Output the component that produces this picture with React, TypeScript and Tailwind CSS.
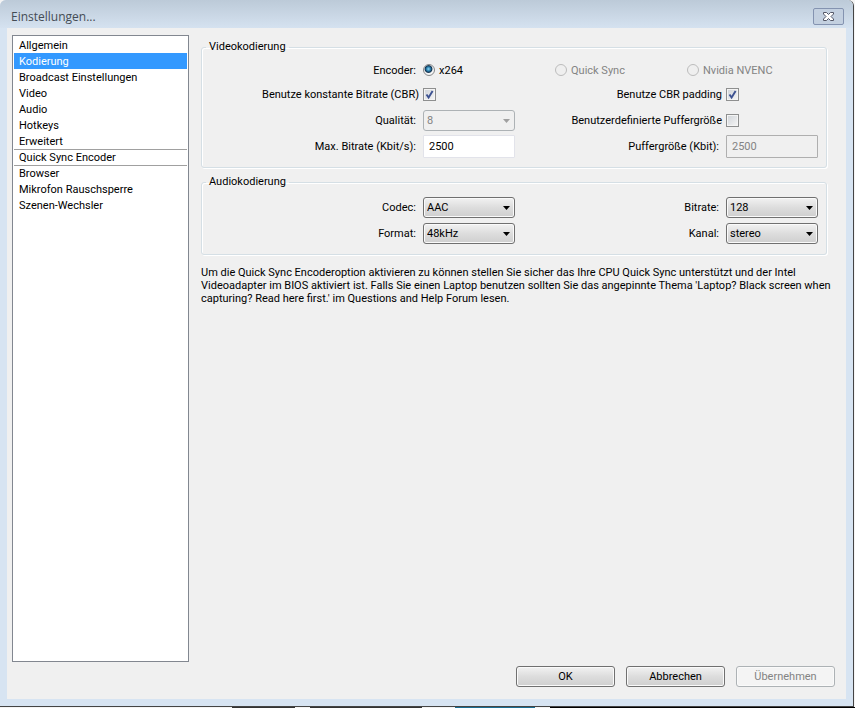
import type { ReactNode } from 'react';

const sections = [
  'Allgemein',
  'Kodierung',
  'Broadcast Einstellungen',
  'Video',
  'Audio',
  'Hotkeys',
  'Erweitert',
  'Quick Sync Encoder',
  'Browser',
  'Mikrofon Rauschsperre',
  'Szenen-Wechsler',
];

function Group({ title, children }: { title: string; children: ReactNode }) {
  return (
    <fieldset className="min-w-0 rounded-[3px] border border-[#d5dfe5] pt-[5px] pb-2 shadow-[inset_1px_1px_0_#fff,1px_1px_0_#fff]">
      <legend className="ml-1 px-[3px] leading-[14px]">{title}</legend>
      {children}
    </fieldset>
  );
}

function Row({ children }: { children: ReactNode }) {
  return <div className="flex h-[26px] items-center pr-2">{children}</div>;
}

function Caption({ id, first, tight, children }: { id: string; first?: boolean; tight?: boolean; children: ReactNode }) {
  const size = first ? 'w-[221px] shrink-0' : 'min-w-0 flex-1';
  return (
    <label htmlFor={id} className={`${size} ${tight ? 'pr-1' : 'pr-[7px]'} text-right whitespace-nowrap`}>
      {children}
    </label>
  );
}

function Check({ id, checked }: { id: string; checked?: boolean }) {
  return (
    <div className="w-[92px] shrink-0">
      <span className="relative block size-[13px]">
        <input
          id={id}
          type="checkbox"
          defaultChecked={checked}
          className="peer block size-[13px] appearance-none border border-[#8e8f8f] bg-linear-to-br from-[#cfd3d8] to-[#f6f6f6] shadow-[inset_0_0_0_1px_#f4f4f4]"
        />
        <svg viewBox="0 0 13 13" className="pointer-events-none absolute inset-0 hidden size-[13px] peer-checked:block" aria-hidden="true">
          <path d="M3.5 6.5 L5.6 9.6 L9.6 3" fill="none" stroke="#3d5291" strokeWidth="1.9" />
        </svg>
      </span>
    </div>
  );
}

function Radio({ id, label, checked, disabled }: { id: string; label: string; checked?: boolean; disabled?: boolean }) {
  return (
    <div className="flex w-[132px] items-center gap-1">
      <input
        id={id}
        type="radio"
        name="encoder"
        defaultChecked={checked}
        disabled={disabled}
        className="size-3 appearance-none rounded-full border border-[#858789] bg-[#f4f4f4] checked:bg-[radial-gradient(circle_at_45%_40%,#8fd8f5_0,#2a7fae_25%,#12324f_42%,#f4f4f4_54%)] disabled:border-[#bcbcbc] disabled:bg-[#efefef]"
      />
      <label htmlFor={id} className={`whitespace-nowrap ${disabled ? 'text-[#838383]' : ''}`}>
        {label}
      </label>
    </div>
  );
}

function Drop({ id, value, disabled }: { id: string; value: string; disabled?: boolean }) {
  return (
    <div className="relative w-[92px] shrink-0">
      <select
        id={id}
        disabled={disabled}
        defaultValue={value}
        className="block h-[21px] w-full appearance-none rounded-[3px] border border-[#707070] bg-linear-to-b from-[#f2f2f2] from-0% via-[#ddd] via-50% to-[#cfcfcf] px-[3px] leading-[19px] shadow-[inset_0_0_0_1px_#fafafa] disabled:border-[#adb2b5] disabled:bg-none disabled:text-[#838383] disabled:opacity-100 disabled:shadow-none"
      >
        <option>{value}</option>
      </select>
      <svg viewBox="0 0 7 4" className={`pointer-events-none absolute top-[9px] right-[5px] h-1 w-[7px] ${disabled ? 'fill-[#a0a0a0]' : 'fill-black'}`} aria-hidden="true">
        <path d="M0 0H7L3.5 4Z" />
      </svg>
    </div>
  );
}

function Field({ id, value, disabled }: { id: string; value: string; disabled?: boolean }) {
  return (
    <input
      id={id}
      type="text"
      defaultValue={value}
      disabled={disabled}
      className="h-[23px] w-[92px] shrink-0 rounded-[1px] border border-[#e2e3ea] bg-white px-[5px] disabled:border-[#afafaf] disabled:bg-[#f0f0f0] disabled:text-[#838383]"
    />
  );
}

function Action({ label, disabled }: { label: string; disabled?: boolean }) {
  return (
    <button
      type="button"
      disabled={disabled}
      className="h-[21px] w-[99px] rounded-[3px] border border-[#707070] bg-linear-to-b from-[#f2f2f2] from-0% via-[#ddd] via-50% to-[#cfcfcf] shadow-[inset_0_0_0_1px_#fafafa] disabled:border-[#adb2b5] disabled:bg-[#f4f4f4] disabled:bg-none disabled:text-[#838383]"
    >
      {label}
    </button>
  );
}

/* Sliver of the desktop that shows below the window. */
function Desktop() {
  return (
    <div className="-mr-px flex h-px" aria-hidden="true">
      <div className="w-[232px]" />
      <div className="w-[63px] bg-[#333]" />
      <div className="w-[15px]" />
      <div className="w-[112px] bg-[#333]" />
      <div className="w-[33px]" />
      <div className="w-20 bg-[#1b6d92]" />
      <div className="w-[15px]" />
      <div className="flex-1 bg-black" />
    </div>
  );
}

export default function App() {
  return (
    <div className="flex min-h-screen flex-col bg-[#f4f4f4] pr-px font-[Roboto,sans-serif] text-[11px] leading-[13px] text-black">
      <div className="flex flex-1 flex-col rounded-t-md border-r border-b border-[#444] bg-[#d7e4f2] px-[7px] pb-[7px]">
        <header className="-mx-[7px] flex h-7 items-center justify-between rounded-t-md bg-linear-to-b from-[#bccad8] to-[#d5e2f0] pt-1 pr-[9px] pl-[11px]">
          <h1 className="font-['Open_Sans',sans-serif] text-[12px] text-[#444c55]">Einstellungen...</h1>
          <button type="button" aria-label="Schließen" className="flex h-[17px] w-[31px] items-center justify-center rounded-[2px] border border-[#8493b0] bg-[#c3d0e0]">
            <svg viewBox="0 0 13 11" className="h-[11px] w-[13px]" aria-hidden="true">
              <path d="M1.5 1.5H4.5L6.5 3.5L8.5 1.5H11.5V3L9 5.5L11.5 8V9.5H8.5L6.5 7.5L4.5 9.5H1.5V8L4 5.5L1.5 3Z" fill="#fff" stroke="#535666" />
            </svg>
          </button>
        </header>
        <main className="flex flex-1 flex-col bg-[#f0f0f0] pt-[7px] pl-[5px]">
          <div className="flex flex-1">
            <nav className="w-[177px] shrink-0 border border-[#828790] bg-white p-px">
              <ul>
                {sections.map((name) => (
                  <li key={name} className={name === 'Quick Sync Encoder' ? 'shadow-[0_1px_0_#a0a0a0,inset_0_1px_0_#a0a0a0]' : ''}>
                    <a href="#" className={`block h-4 pl-[5px] leading-[18px] ${name === 'Kodierung' ? 'bg-[#3399ff] text-white' : ''}`}>
                      {name}
                    </a>
                  </li>
                ))}
              </ul>
            </nav>
            <div className="flex min-w-0 flex-1 flex-col gap-[7px] pt-[5px] pr-[19px] pl-3">
              <Group title="Videokodierung">
                <div className="flex h-[22px] items-center">
                  <Caption id="x264" first>Encoder:</Caption>
                  <Radio id="x264" label="x264" checked />
                  <Radio id="qsv" label="Quick Sync" disabled />
                  <Radio id="nvenc" label="Nvidia NVENC" disabled />
                </div>
                <Row>
                  <Caption id="cbr" first tight>Benutze konstante Bitrate (CBR)</Caption>
                  <Check id="cbr" checked />
                  <Caption id="padding" tight>Benutze CBR padding</Caption>
                  <Check id="padding" checked />
                </Row>
                <Row>
                  <Caption id="quality" first>Qualität:</Caption>
                  <Drop id="quality" value="8" disabled />
                  <Caption id="custom" tight>Benutzerdefinierte Puffergröße</Caption>
                  <Check id="custom" />
                </Row>
                <Row>
                  <Caption id="max" first>Max. Bitrate (Kbit/s):</Caption>
                  <Field id="max" value="2500" />
                  <Caption id="buffer">Puffergröße (Kbit):</Caption>
                  <Field id="buffer" value="2500" disabled />
                </Row>
              </Group>
              <Group title="Audiokodierung">
                <Row>
                  <Caption id="codec" first>Codec:</Caption>
                  <Drop id="codec" value="AAC" />
                  <Caption id="bitrate">Bitrate:</Caption>
                  <Drop id="bitrate" value="128" />
                </Row>
                <Row>
                  <Caption id="format" first>Format:</Caption>
                  <Drop id="format" value="48kHz" />
                  <Caption id="channel">Kanal:</Caption>
                  <Drop id="channel" value="stereo" />
                </Row>
              </Group>
              <p className="-mr-3 pt-1">
                Um die Quick Sync Encoderoption aktivieren zu können stellen Sie sicher das Ihre CPU Quick Sync unterstützt und der Intel Videoadapter im BIOS aktiviert ist. Falls Sie einen Laptop benutzen sollten Sie das angepinnte Thema 'Laptop? Black screen when capturing? Read here first.' im Questions and Help Forum lesen.
              </p>
            </div>
          </div>
          <div className="flex h-[37px] items-start justify-end gap-[11px] pt-1 pr-[11px]">
            <Action label="OK" />
            <Action label="Abbrechen" />
            <Action label="Übernehmen" disabled />
          </div>
        </main>
      </div>
      <Desktop />
    </div>
  );
}
